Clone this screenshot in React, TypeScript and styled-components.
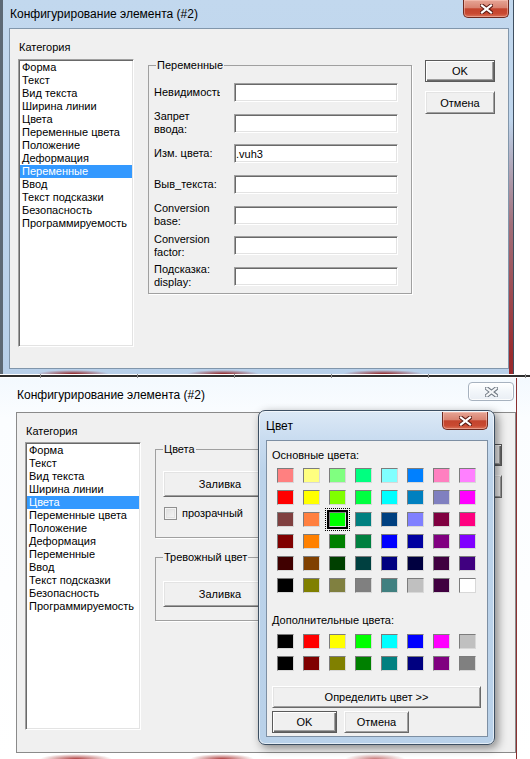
import React from "react";
import styled, { createGlobalStyle, css } from "styled-components";

const UI = `"Liberation Sans", Arial, sans-serif`;

const GlobalStyle = createGlobalStyle`
  html, body { margin: 0; padding: 0; background: #ffffff; }
  body { width: 530px; height: 759px; overflow: hidden; font-family: ${UI}; font-size: 11px; color: #000; }
  * { box-sizing: border-box; }
`;

const Screen = styled.main`
  width: 530px;
  height: 759px;
  display: flex;
  flex-direction: column;
  overflow: hidden;
`;

const Shot = styled.section<{ $h: number; $bg: string }>`
  position: relative;
  flex: none;
  height: ${(p) => p.$h}px;
  background: ${(p) => p.$bg};
  display: flex;
  flex-direction: column;
  overflow: hidden;
`;

const Window = styled.div<{ $active: boolean; $left: number; $right: number; $bottom: number }>`
  flex: none;
  display: flex;
  flex-direction: column;
  padding: 0 ${(p) => p.$right}px ${(p) => p.$bottom}px ${(p) => p.$left}px;
  ${(p) =>
    p.$active
      ? css`
          margin-left: 3px;
          width: 511px;
          border-right: 1px solid #3f4f60;
          background:
            linear-gradient(to bottom, transparent 0 32%, rgba(140, 30, 30, 0.55) 60%, rgba(150, 25, 25, 0.9) 95%) right top / 4px 100% no-repeat,
            radial-gradient(ellipse 36px 4px at 70px 100%, rgba(145, 25, 25, 0.95), transparent) no-repeat,
            radial-gradient(ellipse 36px 4px at 220px 100%, rgba(145, 25, 25, 0.95), transparent) no-repeat,
            radial-gradient(ellipse 40px 4px at 380px 100%, rgba(145, 25, 25, 0.95), transparent) no-repeat,
            linear-gradient(to bottom, #c2d8ee, #b8d0ea);
        `
      : css`
          width: 530px;
          background:
            linear-gradient(to right, transparent 0 516px, #8a3030 516px 517px, transparent 517px) ,
            radial-gradient(ellipse 36px 5px at 76px 100%, rgba(160, 30, 30, 0.85), transparent) no-repeat,
            radial-gradient(ellipse 32px 5px at 222px 100%, rgba(160, 30, 30, 0.85), transparent) no-repeat,
            radial-gradient(ellipse 30px 5px at 375px 100%, rgba(160, 30, 30, 0.6), transparent) no-repeat,
            linear-gradient(to bottom, #f3f9fe, #fbfdff 40px, #ffffff);
        `}
`;

const TitleBar = styled.header<{ $h: number; $pad: number }>`
  height: ${(p) => p.$h}px;
  margin-left: -${(p) => p.$pad}px;
  display: flex;
  align-items: center;
  padding-left: 7px;
`;

const TitleText = styled.span<{ $shift?: number }>`
  flex: 1;
  font-family: ${UI};
  font-size: 12px;
  color: #000;
  white-space: nowrap;
  margin-left: ${(p) => p.$shift ?? 0}px;
`;

const CloseButton = styled.div<{ $active: boolean; $top: number; $w: number; $h: number; $mr: number }>`
  align-self: flex-start;
  margin-top: ${(p) => p.$top}px;
  margin-right: ${(p) => p.$mr}px;
  width: ${(p) => p.$w}px;
  height: ${(p) => p.$h}px;
  display: flex;
  align-items: center;
  justify-content: center;
  border-radius: 0 0 5px 5px;
  ${(p) =>
    p.$active
      ? css`
          border: 1px solid #6e2a20;
          border-top: none;
          background: linear-gradient(to bottom, #e6a595 0%, #d98371 45%, #c3442d 52%, #c94a32 80%, #d9735a 100%);
          box-shadow: inset 0 0 0 1px rgba(255, 210, 200, 0.45);
        `
      : css`
          border: 1px solid #a7b2bf;
          border-radius: 4px;
          background: linear-gradient(to bottom, #ffffff, #f2f6fa 50%, #e9eef4);
          box-shadow: inset 0 0 0 1px rgba(255, 255, 255, 0.8);
        `}
`;

const XGlyph = ({ active }: { active: boolean }) => (
  <svg width="13" height="10" viewBox="0 0 13 10" aria-hidden>
    <path
      d="M2 1.5 L11 8.5 M11 1.5 L2 8.5"
      stroke={active ? "#5a1a12" : "#6e7782"}
      strokeWidth="4.2"
      strokeLinecap="square"
      fill="none"
    />
    <path
      d="M2 1.5 L11 8.5 M11 1.5 L2 8.5"
      stroke={active ? "#ffffff" : "#f4f6f8"}
      strokeWidth="2.2"
      strokeLinecap="square"
      fill="none"
    />
  </svg>
);

const Client = styled.div<{ $edge: string }>`
  flex: none;
  width: 500px;
  height: 341px;
  border: 1px solid ${(p) => p.$edge};
  background: #f0f0f0;
  display: flex;
  align-items: flex-start;
  padding-left: 8px;
`;

const CategoryCol = styled.div`
  width: 116px;
  padding-top: 12px;
  display: flex;
  flex-direction: column;
`;

const CategoryLabel = styled.div`
  height: 13px;
  line-height: 13px;
  padding-left: 1px;
  white-space: nowrap;
`;

const ListBox = styled.div<{ $top: number }>`
  margin-top: ${(p) => p.$top}px;
  height: 288px;
  background: #fff;
  border: 1px solid;
  border-color: #a0a0a0 #ffffff #ffffff #a0a0a0;
  box-shadow: inset 1px 1px 0 #696969, inset -1px -1px 0 #e3e3e3;
  padding: 1px 1px;
  display: flex;
  flex-direction: column;
`;

const ListItem = styled.div<{ $selected: boolean }>`
  height: 13px;
  line-height: 13px;
  padding-left: 2px;
  white-space: nowrap;
  color: ${(p) => (p.$selected ? "#fff" : "#000")};
  background: ${(p) => (p.$selected ? "#3399ff" : "transparent")};
`;

const Panel = styled.div`
  width: 264px;
  margin-left: 14px;
  margin-top: 30px;
  display: flex;
  flex-direction: column;
  gap: 13px;
`;

const GroupBox = styled.fieldset`
  margin: 0;
  padding: 0;
  min-width: 0;
  border: 1px solid #a0a0a0;
  box-shadow: 1px 1px 0 #ffffff;
`;

const Legend = styled.legend`
  margin-left: 7px;
  padding: 0 1px 0 1px;
  line-height: 13px;
  font-size: 11px;
  white-space: nowrap;
`;

const FieldGrid = styled.div`
  display: grid;
  grid-template-columns: 66px 164px;
  grid-auto-rows: 19px;
  column-gap: 14px;
  row-gap: 11.67px;
  padding: 11px 13px 7px 5px;
`;

const FieldLabel = styled.div`
  align-self: center;
  line-height: 13px;
  white-space: pre;
  overflow: clip visible;
`;

const TextBox = styled.input`
  width: 164px;
  height: 19px;
  margin: 0;
  padding: 0 1px;
  font-family: ${UI};
  font-size: 11px;
  color: #000;
  background: #fff;
  border: 1px solid;
  border-color: #a0a0a0 #ffffff #ffffff #a0a0a0;
  box-shadow: inset 1px 1px 0 #696969, inset -1px -1px 0 #e3e3e3;
  outline: none;
`;

const ButtonCol = styled.div`
  width: 70px;
  margin-left: 13px;
  margin-top: 31px;
  display: flex;
  flex-direction: column;
  gap: 9px;
`;

const PushButton = styled.button<{ $default?: boolean; $w: number; $h: number; $mt?: number }>`
  flex: none;
  width: ${(p) => p.$w}px;
  height: ${(p) => p.$h}px;
  margin: ${(p) => p.$mt ?? 0}px 0 0 0;
  padding: 0;
  font-family: ${UI};
  font-size: 11px;
  color: #000;
  background: #f0f0f0;
  border: 1px solid;
  ${(p) =>
    p.$default
      ? css`
          border-color: #5a5a5a;
          box-shadow: inset 1px 1px 0 #ffffff, inset -1px -1px 0 #696969, inset -2px -2px 0 #a0a0a0;
        `
      : css`
          border-color: #ffffff #696969 #696969 #ffffff;
          box-shadow: inset 1px 1px 0 #e3e3e3, inset -1px -1px 0 #a0a0a0;
        `}
`;

const GroupBody = styled.div<{ $pt: number; $pb: number }>`
  display: flex;
  flex-direction: column;
  align-items: flex-start;
  padding: ${(p) => p.$pt}px 0 ${(p) => p.$pb}px 7px;
`;

const CheckRow = styled.label`
  margin-top: 10px;
  margin-left: 1px;
  display: flex;
  align-items: center;
  gap: 5px;
  line-height: 13px;
`;

const CheckBox = styled.span`
  width: 13px;
  height: 13px;
  border: 1px solid #8f8f8f;
  background: linear-gradient(135deg, #dcdcdc, #f8f8f8);
  box-shadow: inset 0 0 0 1px #f4f4f4, inset 0 0 0 2px #e2e2e2;
`;

/* ---------- Colour dialog ---------- */

const ColorDialog = styled.div`
  position: absolute;
  left: 258px;
  top: 32px;
  width: 237px;
  height: 335px;
  border: 1px solid #3d4f62;
  border-radius: 7px;
  background: linear-gradient(to bottom, #dce9f6 0, #c9dcf0 28px, #bcd3ea 60px, #b9d1e9);
  box-shadow: 3px 3px 10px rgba(0, 0, 0, 0.45), inset 0 0 0 1px rgba(255, 255, 255, 0.6);
  display: flex;
  flex-direction: column;
  padding: 0 6px 6px 7px;
`;

const CDTitleBar = styled.header`
  height: 29px;
  display: flex;
  align-items: center;
`;

const CDClient = styled.div`
  width: 222px;
  height: 297px;
  border: 1px solid #7d8fa3;
  background: #f0f0f0;
  display: flex;
  flex-direction: column;
  align-items: flex-start;
  padding: 7px 0 0 5px;
`;

const SectionLabel = styled.div<{ $mt: number }>`
  margin-top: ${(p) => p.$mt}px;
  line-height: 13px;
  height: 13px;
  white-space: nowrap;
`;

const SwatchGrid = styled.div<{ $mt: number }>`
  margin-top: ${(p) => p.$mt}px;
  margin-left: 5px;
  display: grid;
  grid-template-columns: repeat(8, 17px);
  grid-auto-rows: 15px;
  column-gap: 9px;
  row-gap: 7px;
`;

const Swatch = styled.div<{ $c: string; $sel?: boolean }>`
  width: 17px;
  height: 15px;
  background: ${(p) => p.$c};
  border: 1px solid;
  border-color: #7c7c7c #d8d8d8 #d8d8d8 #7c7c7c;
  ${(p) =>
    p.$sel &&
    css`
      box-shadow: 0 0 0 1px #000, 0 0 0 2px #000;
      outline: 1px dotted #000;
      outline-offset: 3px;
    `}
`;

const CDButtonRow = styled.div`
  margin-top: 3px;
  display: flex;
  gap: 7px;
`;

const basic = [
  ["#FF8080", "#FFFF80", "#80FF80", "#00FF80", "#80FFFF", "#0080FF", "#FF80C0", "#FF80FF"],
  ["#FF0000", "#FFFF00", "#80FF00", "#00FF40", "#00FFFF", "#0080C0", "#8080C0", "#FF00FF"],
  ["#804040", "#FF8040", "#00FF00", "#008080", "#004080", "#8080FF", "#800040", "#FF0080"],
  ["#800000", "#FF8000", "#008000", "#008040", "#0000FF", "#0000A0", "#800080", "#8000FF"],
  ["#400000", "#804000", "#004000", "#004040", "#000080", "#000040", "#400040", "#400080"],
  ["#000000", "#808000", "#808040", "#808080", "#408080", "#C0C0C0", "#400040", "#FFFFFF"],
];

const custom = [
  ["#000000", "#FF0000", "#FFFF00", "#00FF00", "#00FFFF", "#0000FF", "#FF00FF", "#C0C0C0"],
  ["#000000", "#800000", "#808000", "#008000", "#008080", "#000080", "#800080", "#808080"],
];

const categories = [
  "Форма",
  "Текст",
  "Вид текста",
  "Ширина линии",
  "Цвета",
  "Переменные цвета",
  "Положение",
  "Деформация",
  "Переменные",
  "Ввод",
  "Текст подсказки",
  "Безопасность",
  "Программируемость",
];

const fields: { label: string; value?: string }[] = [
  { label: "Невидимость" },
  { label: "Запрет\nввода:" },
  { label: "Изм. цвета:", value: ".vuh3" },
  { label: "Выв_текста:" },
  { label: "Conversion\nbase:" },
  { label: "Conversion\nfactor:" },
  { label: "Подсказка:\ndisplay:" },
];

const TaskStrip = styled.div`
  height: 4px;
  flex: none;
  background:
    repeating-linear-gradient(to right, transparent 0 40px, #8c8c8c 40px 41px, transparent 41px 97px),
    linear-gradient(to bottom, #ffffff 0 1px, #2e2e2e 1px 3px, #ffffff 3px);
`;

const Category = ({ selected, listTop }: { selected: string; listTop: number }) => (
  <CategoryCol>
    <CategoryLabel>Категория</CategoryLabel>
    <ListBox $top={listTop}>
      {categories.map((c) => (
        <ListItem key={c} $selected={c === selected}>
          {c}
        </ListItem>
      ))}
    </ListBox>
  </CategoryCol>
);

const DialogButtons = () => (
  <ButtonCol>
    <PushButton $default $w={70} $h={22}>
      OK
    </PushButton>
    <PushButton $w={70} $h={23}>
      Отмена
    </PushButton>
  </ButtonCol>
);

export default function App() {
  return (
    <>
      <GlobalStyle />
      <Screen>
        <Shot $h={378} $bg="linear-gradient(to right, #5d6975 0 3px, #ffffff 3px)">
          <Window $active $left={6} $right={4} $bottom={5}>
            <TitleBar $h={28} $pad={6}>
              <TitleText>Конфигурирование элемента (#2)</TitleText>
              <CloseButton $active $top={0} $w={46} $h={18} $mr={0}>
                <XGlyph active />
              </CloseButton>
            </TitleBar>
            <Client $edge="#8196ab">
              <Category selected="Переменные" listTop={5} />
              <Panel>
                <GroupBox>
                  <Legend>Переменные</Legend>
                  <FieldGrid>
                    {fields.map((f) => (
                      <React.Fragment key={f.label}>
                        <FieldLabel>{f.label}</FieldLabel>
                        <TextBox readOnly defaultValue={f.value ?? ""} />
                      </React.Fragment>
                    ))}
                  </FieldGrid>
                </GroupBox>
              </Panel>
              <DialogButtons />
            </Client>
          </Window>
          <TaskStrip />
        </Shot>

        <Shot $h={381} $bg="#ffffff">
          <Window $active={false} $left={16} $right={14} $bottom={6}>
            <TitleBar $h={34} $pad={16}>
              <TitleText $shift={10}>Конфигурирование элемента (#2)</TitleText>
              <CloseButton $active={false} $top={4} $w={46} $h={19} $mr={2}>
                <XGlyph active={false} />
              </CloseButton>
            </TitleBar>
            <Client $edge="#8a8a8a">
              <Category selected="Цвета" listTop={4} />
              <Panel>
                <GroupBox>
                  <Legend>Цвета</Legend>
                  <GroupBody $pt={15} $pb={17}>
                    <PushButton $w={114} $h={26}>
                      Заливка
                    </PushButton>
                    <CheckRow>
                      <CheckBox />
                      прозрачный
                    </CheckRow>
                  </GroupBody>
                </GroupBox>
                <GroupBox>
                  <Legend>Тревожный цвет</Legend>
                  <GroupBody $pt={17} $pb={13}>
                    <PushButton $w={114} $h={26}>
                      Заливка
                    </PushButton>
                  </GroupBody>
                </GroupBox>
              </Panel>
              <DialogButtons />
            </Client>
          </Window>

          <ColorDialog>
            <CDTitleBar>
              <TitleText>Цвет</TitleText>
              <CloseButton $active $top={1} $w={46} $h={18} $mr={0}>
                <XGlyph active />
              </CloseButton>
            </CDTitleBar>
            <CDClient>
              <SectionLabel $mt={1}>Основные цвета:</SectionLabel>
              <SwatchGrid $mt={6}>
                {basic.flatMap((row, r) =>
                  row.map((c, i) => <Swatch key={`b${r}-${i}`} $c={c} $sel={r === 2 && i === 2} />)
                )}
              </SwatchGrid>
              <SectionLabel $mt={21}>Дополнительные цвета:</SectionLabel>
              <SwatchGrid $mt={7}>
                {custom.flatMap((row, r) => row.map((c, i) => <Swatch key={`c${r}-${i}`} $c={c} />))}
              </SwatchGrid>
              <PushButton $w={209} $h={22} $mt={15}>
                Определить цвет &gt;&gt;
              </PushButton>
              <CDButtonRow>
                <PushButton $default $w={65} $h={22}>
                  OK
                </PushButton>
                <PushButton $w={65} $h={22}>
                  Отмена
                </PushButton>
              </CDButtonRow>
            </CDClient>
          </ColorDialog>
        </Shot>
      </Screen>
    </>
  );
}
